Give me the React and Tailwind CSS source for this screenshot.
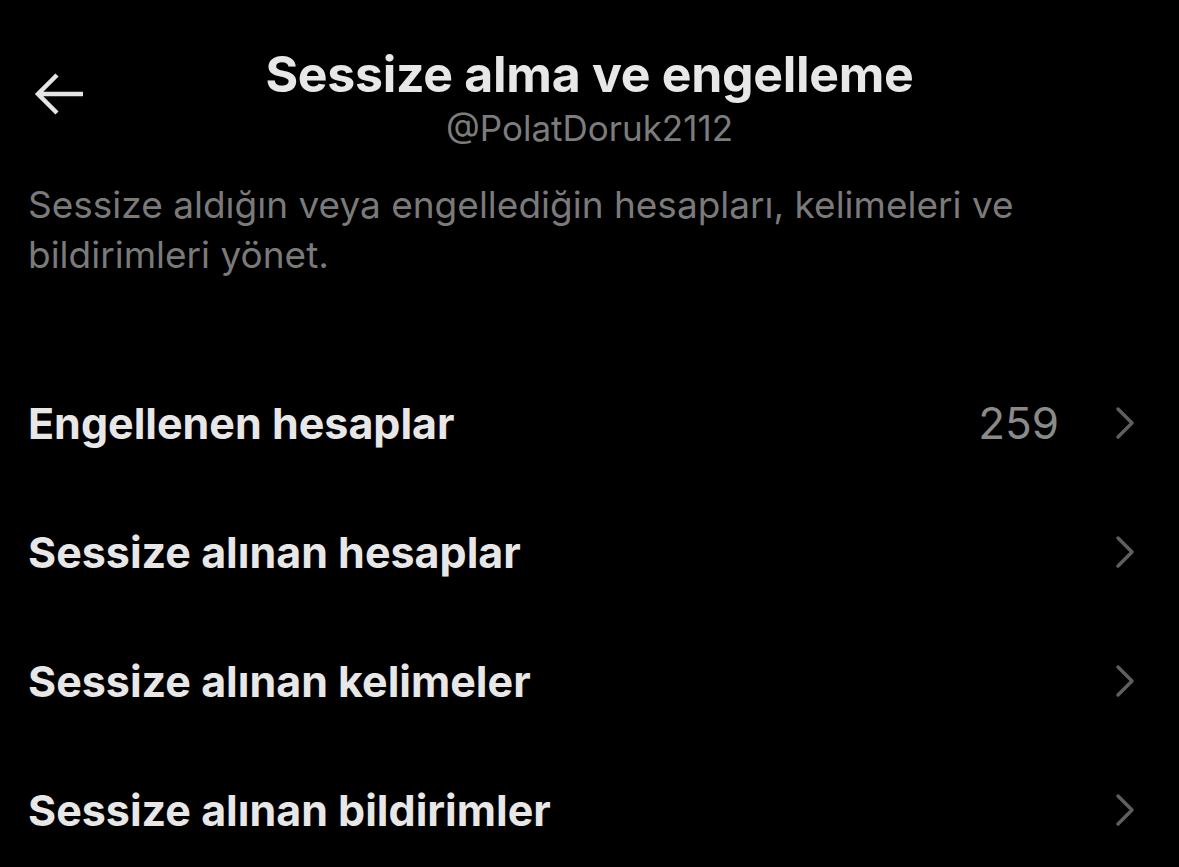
import React from 'react';

const rows = [
  { label: 'Engellenen hesaplar', count: '259' },
  { label: 'Sessize alınan hesaplar' },
  { label: 'Sessize alınan kelimeler' },
  { label: 'Sessize alınan bildirimler' },
];

const Chevron = () => (
  <svg className="w-[26px] h-[34px]" viewBox="0 0 26 34" fill="none">
    <path d="M5 3l14 14L5 31" stroke="#5f5f5f" strokeWidth="3.5" strokeLinecap="round" strokeLinejoin="round" />
  </svg>
);

export default function App() {
  return (
    <div className="w-[1179px] h-[867px] bg-black overflow-hidden font-['Inter',sans-serif] text-[#e7e7e7]">
      <header className="relative flex flex-col items-center pt-[44px]">
        <button className="absolute left-[33px] top-[70px]">
          <svg className="w-[52px] h-[48px]" viewBox="0 0 52 48" fill="none">
            <path d="M50 24H5M24 5L5 24l19 19" stroke="#e4e4e4" strokeWidth="4.5" strokeLinejoin="miter" />
          </svg>
        </button>
        <h1 className="text-[50px] font-bold leading-[60px] tracking-[-0.3px]">Sessize alma ve engelleme</h1>
        <div className="text-[35px] leading-[40px] text-[#7c7c7c] mt-[4px]">@PolatDoruk2112</div>
      </header>
      <p className="px-[28px] pt-[32px] pr-[120px] text-[37px] leading-[50px] text-[#7a7a7a]">
        Sessize aldığın veya engellediğin hesapları, kelimeleri ve bildirimleri yönet.
      </p>
      <ul className="mt-[78px]">
        {rows.map((r) => (
          <li key={r.label} className="flex items-center h-[129px] pl-[28px] pr-[40px]">
            <span className="flex-1 text-[43px] font-bold leading-[50px]">{r.label}</span>
            {r.count && <span className="text-[44px] text-[#8a8a8a] mr-[54px]">{r.count}</span>}
            <Chevron />
          </li>
        ))}
      </ul>
    </div>
  );
}
